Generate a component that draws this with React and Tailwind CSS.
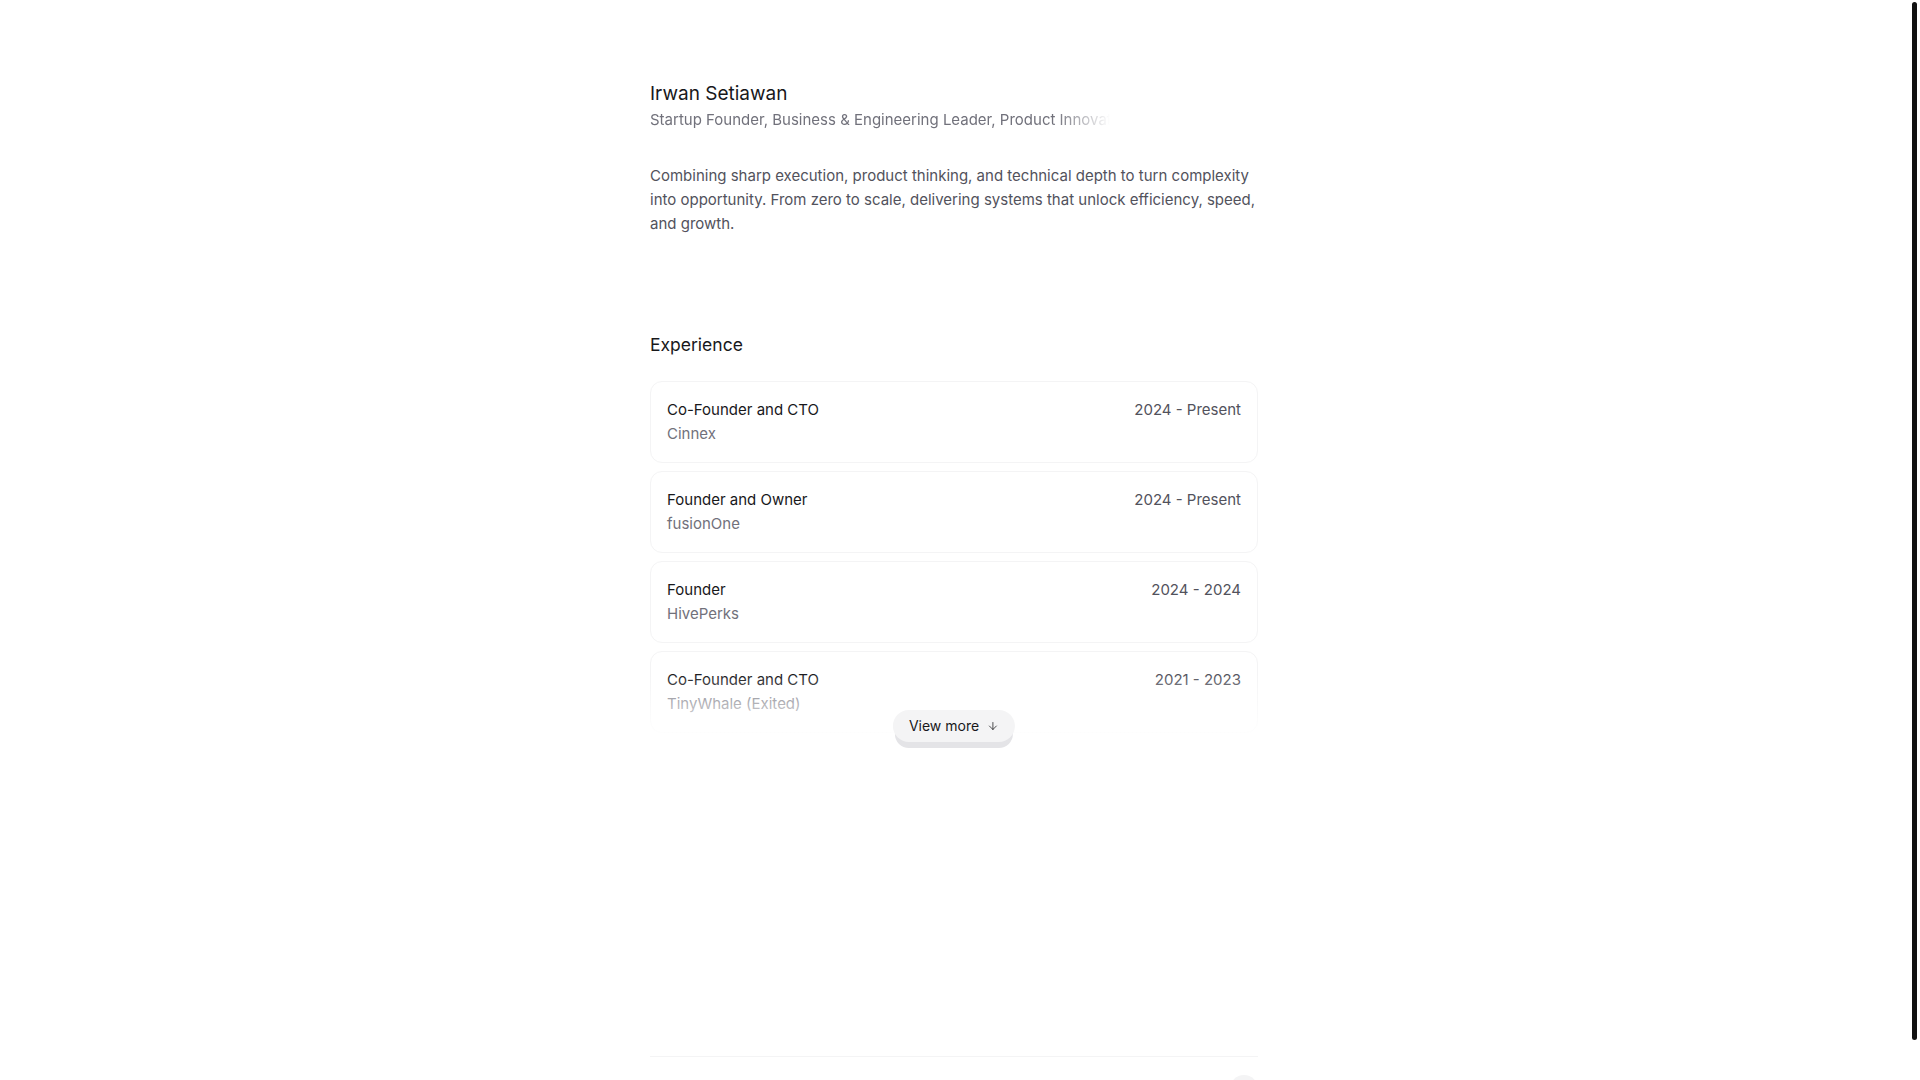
import React from 'react';
import { ArrowDown } from 'lucide-react';

const experience = [
    { role: 'Co-Founder and CTO', company: 'Cinnex', period: '2024 - Present' },
    { role: 'Founder and Owner', company: 'fusionOne', period: '2024 - Present' },
    { role: 'Founder', company: 'HivePerks', period: '2024 - 2024' },
    { role: 'Co-Founder and CTO', company: 'TinyWhale (Exited)', period: '2021 - 2023' },
];

const ExperienceCard = ({ role, company, period }) => (
    <div className="flex items-start justify-between rounded-xl border border-zinc-100 bg-white px-4 py-4">
        <div className="flex flex-col">
            <p className="text-[15px] leading-6 text-zinc-900">{role}</p>
            <p className="text-[15px] leading-6 text-zinc-500">{company}</p>
        </div>
        <p className="text-[15px] leading-6 text-zinc-600">{period}</p>
    </div>
);

const App = () => {
    return (
        <div className="flex h-screen bg-white font-[Inter,sans-serif] text-zinc-900 antialiased">
            <main className="flex-1 overflow-y-auto">
                <div className="mx-auto w-[608px] pt-20">
                    {/* Intro */}
                    <header>
                        <h1 className="text-[19px] leading-7 font-normal text-zinc-900">Irwan Setiawan</h1>
                        <p className="w-[460px] overflow-hidden whitespace-nowrap text-[15px] leading-6 text-zinc-500 [mask-image:linear-gradient(to_right,black_88%,transparent)]">
                            Startup Founder, Business &amp; Engineering Leader, Product Innovator
                        </p>
                    </header>

                    <p className="mt-8 text-[15px] leading-6 text-zinc-600">
                        Combining sharp execution, product thinking, and technical depth to turn complexity into opportunity. From zero to scale, delivering systems that unlock efficiency, speed, and growth.
                    </p>

                    {/* Experience */}
                    <section className="mt-[95px]">
                        <h2 className="text-[17.5px] leading-7 font-normal text-zinc-900">Experience</h2>
                        <div className="relative mt-[22px]">
                            <div className="flex flex-col gap-2">
                                {experience.map((item, i) => (
                                    <ExperienceCard key={i} {...item} />
                                ))}
                            </div>
                            <div className="pointer-events-none absolute inset-x-0 bottom-0 h-[60px] bg-gradient-to-b from-white/0 to-white/90"></div>
                            <button className="absolute bottom-[-9px] left-1/2 flex h-8 -translate-x-1/2 items-center gap-2 rounded-full bg-[#f4f4f5] px-4 text-sm text-zinc-900 shadow-[0_8px_0_-2px_#e4e4e7]">
                                View more
                                <ArrowDown size={12} strokeWidth={1.5} />
                            </button>
                        </div>
                    </section>

                    {/* Footer */}
                    <footer className="mt-[323px] flex justify-end border-t border-zinc-100 pt-[18px] pb-4">
                        <button className="size-7 rounded-full bg-zinc-100"></button>
                    </footer>
                </div>
            </main>

            {/* scrollbar track */}
            <div className="w-3 shrink-0 py-0.5">
                <div className="ml-1 h-[1038px] w-[5px] rounded-full bg-[#111111]"></div>
            </div>
        </div>
    );
};

export default App;
